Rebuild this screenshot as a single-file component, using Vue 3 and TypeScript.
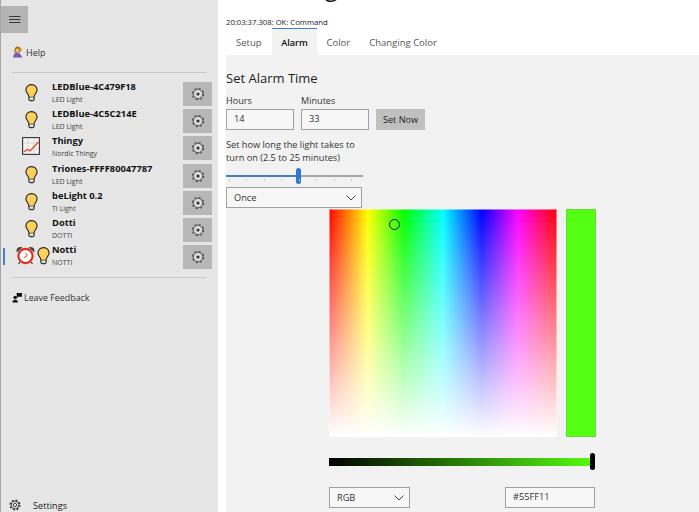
<template>
  <div class="app">
    <aside class="nav">
      <button class="burger" aria-label="Menu">
        <svg width="12" height="8" viewBox="0 0 12 8"><path d="M0 .5h11.5M0 3.5h11.5M0 6.5h11.5" stroke="#3a3a3a" stroke-width="1" fill="none" /></svg>
      </button>

      <div class="help">
        <svg width="11" height="12" viewBox="0 0 12 13">
          <path d="M1 12.5 2.5 8l3-1 3 1 3 4.500z" fill="#7a5bb5" />
          <path d="M2.500 7C2.500 2.500 4 .5 6 .5S9.800 2 10 4.500L8.500 7z" fill="#a8682c" />
          <circle cx="6" cy="4.600" r="2" fill="#f7c55a" />
          <path d="M9 4l2.500-1.500.5 1L9.500 6z" fill="#f0b64a" />
        </svg>
        <span>Help</span>
      </div>
      <div class="rule"></div>

      <div class="devices">
        <div v-for="d in devices" :key="d.name" class="device" :class="{ selected: d.selected }">
          <div class="device-icons">
            <svg v-if="d.alarm" class="alarm" width="19" height="19" viewBox="0 0 19 19">
              <path d="M.8 6.500C-.5 2 3 .2 6.500 1.500zM18.200 6.500C19.500 2 16 .2 12.500 1.500z" fill="#444" />
              <path d="M4 16l-1.500 2M15 16l1.500 2" stroke="#333" stroke-width="1.200" />
              <circle cx="9.500" cy="10" r="7.100" fill="#fff" stroke="#e62c18" stroke-width="2.100" />
              <path d="M9.500 7l1.800 3-3.500 1.600" stroke="#e8503c" stroke-width="1" fill="none" />
            </svg>
            <svg v-if="d.icon === 'bulb'" width="13" height="19" viewBox="0 0 14 19">
              <path d="M7 1C3.500 1 1 3.400 1 6.700 1 9.800 4 11.200 4.300 14.500v2.300c0 .9.700 1.400 1.500 1.400h2.400c.8 0 1.500-.5 1.500-1.400v-2.300C10 11.200 13 9.800 13 6.700 13 3.400 10.500 1 7 1z" fill="#fdd05c" stroke="#222" stroke-width="1.200" />
              <path d="M4.500 14.500h5v2.700c0 .5-.5.700-1 .7H5.500c-.5 0-1-.2-1-.7z" fill="#eee" stroke="#222" stroke-width=".7" />
            </svg>
            <svg v-else width="18" height="18" viewBox="0 0 18 18">
              <rect x=".6" y=".6" width="16.800" height="16.800" fill="#f6f4f2" stroke="#333" stroke-width="1.100" />
              <path d="M6 1v16M12 1v16M1 6h16M1 12h16" stroke="#c8c8c8" stroke-width=".6" />
              <path d="M1.500 15l4-2.500 2.500 1.500L16.500 5" stroke="#e8442c" stroke-width="1.300" fill="none" />
            </svg>
          </div>
          <div class="device-text">
            <div class="device-name">{{ d.name }}</div>
            <div class="device-kind">{{ d.kind }}</div>
          </div>
          <button class="device-gear" aria-label="Device settings">
            <svg width="14" height="14" viewBox="0 0 14 14">
              <circle cx="7" cy="7" r="5.600" fill="none" stroke="#444" stroke-width="1.100" stroke-dasharray="2.200 2.200" />
              <circle cx="7" cy="7" r="4.600" fill="#dcdcdc" stroke="#444" stroke-width=".8" />
              <circle cx="7" cy="7" r="1.600" fill="#333" />
            </svg>
          </button>
        </div>
      </div>
      <div class="rule rule-low"></div>

      <div class="feedback">
        <svg width="10" height="10" viewBox="0 0 11 11">
          <path d="M5 0h6v4H7L5.500 5.200z" fill="#111" />
          <circle cx="3.500" cy="5" r="2" fill="#111" />
          <path d="M.5 10.500c0-2 1-3 3-3s3 1 3 3z" fill="#111" />
        </svg>
        <span>Leave Feedback</span>
      </div>

      <div class="settings">
        <svg width="12" height="12" viewBox="0 0 12 12">
          <circle cx="6" cy="6" r="4.900" fill="none" stroke="#222" stroke-width="1.200" stroke-dasharray="1.920 1.930" />
          <circle cx="6" cy="6" r="3.900" fill="none" stroke="#222" stroke-width=".8" />
          <circle cx="6" cy="6" r="1.700" fill="none" stroke="#222" stroke-width=".8" />
        </svg>
        <span>Settings</span>
      </div>
    </aside>

    <main class="main">
      <div class="title"><span>Device Light</span></div>
      <div class="status">20:03:37.308: OK: Command</div>
      <div class="tabs">
        <div v-for="t in tabs" :key="t" class="tab" :class="{ active: t === 'Alarm' }">{{ t }}</div>
      </div>

      <section class="panel">
        <h2>Set Alarm Time</h2>
        <div class="time-row">
          <label class="field">
            <span>Hours</span>
            <div class="box">14</div>
          </label>
          <label class="field">
            <span>Minutes</span>
            <div class="box">33</div>
          </label>
          <button class="set-now">Set Now</button>
        </div>
        <p class="hint">Set how long the light takes to<br />turn on (2.5 to 25 minutes)</p>
        <div class="slider">
          <div class="track"></div>
          <div class="track-fill"></div>
          <div class="thumb"></div>
          <div class="ticks"><i v-for="n in 8" :key="n"></i></div>
        </div>
        <div class="select once">
          <span>Once</span>
          <svg width="10" height="6" viewBox="0 0 10 6"><path d="M.5.500 5 5 9.500.5" stroke="#444" fill="none" /></svg>
        </div>

        <div class="picker">
          <div class="spectrum">
            <div class="spectrum-white"></div>
            <div class="ring"></div>
          </div>
          <div class="preview"></div>
        </div>

        <div class="value">
          <div class="value-bar"></div>
          <div class="value-thumb"></div>
        </div>

        <div class="picker-foot">
          <div class="select rgb">
            <span>RGB</span>
            <svg width="10" height="6" viewBox="0 0 10 6"><path d="M.5.500 5 5 9.500.5" stroke="#444" fill="none" /></svg>
          </div>
          <div class="box hex">#55FF11</div>
        </div>
      </section>
    </main>
  </div>
</template>

<script setup lang="ts">
interface Device {
  name: string
  kind: string
  icon: 'bulb' | 'chart'
  alarm?: boolean
  selected?: boolean
}

const devices: Device[] = [
  { name: 'LEDBlue-4C479F18', kind: 'LED Light', icon: 'bulb' },
  { name: 'LEDBlue-4C5C214E', kind: 'LED Light', icon: 'bulb' },
  { name: 'Thingy', kind: 'Nordic Thingy', icon: 'chart' },
  { name: 'Triones-FFFF80047787', kind: 'LED Light', icon: 'bulb' },
  { name: 'beLight 0.2', kind: 'TI Light', icon: 'bulb' },
  { name: 'Dotti', kind: 'DOTTI', icon: 'bulb' },
  { name: 'Notti', kind: 'NOTTI', icon: 'bulb', alarm: true, selected: true }
]

const tabs = ['Setup', 'Alarm', 'Color', 'Changing Color']
</script>

<style>
html, body { margin: 0; background: #fff; overflow: hidden; }
</style>

<style scoped>
.app {
  display: flex;
  height: 512px;
  width: 699px;
  overflow: hidden;
  font-family: "Open Sans", "Noto Sans", sans-serif;
  font-size: 10px;
  color: #1c1c1c;
  background: #fff;
}

/* left pane */
.nav {
  width: 217px;
  flex: none;
  display: flex;
  flex-direction: column;
  background: #e6e6e6;
  border-left: 1px solid #a8a4a4;
  position: relative;
}
.burger {
  width: 27px;
  height: 27px;
  margin-top: 6px;
  padding: 0;
  border: 0;
  background: #b4b4b4;
  display: flex;
  align-items: center;
  justify-content: center;
}
.help {
  display: flex;
  align-items: center;
  gap: 3px;
  height: 16px;
  margin: 11px 0 0 11px;
  font-size: 9px;
  color: #333;
}
.rule {
  height: 1px;
  background: #c8c8c8;
  margin: 12px 11px 0 11px;
}
.rule-low { margin-top: 4.6px; }
.devices { margin-top: 9px; }
.device {
  display: flex;
  height: 27.2px;
  position: relative;
}
.device.selected::before {
  content: "";
  position: absolute;
  left: 2px;
  top: 3px;
  width: 2px;
  height: 17px;
  background: #4a7fd4;
}
.device-icons {
  width: 51px;
  flex: none;
  display: flex;
  justify-content: center;
  align-items: flex-start;
  gap: 2px;
  padding: 1px 0 0 9px;
  box-sizing: border-box;
}
.device-icons .alarm { margin-left: 4px; }
.device-text {
  flex: 1;
  min-width: 0;
  margin-top: -1px;
  white-space: nowrap;
}
.device-name {
  font-weight: 700;
  font-size: 9.3px;
  line-height: 11px;
  color: #111;
}
.device-kind {
  font-size: 7px;
  line-height: 9px;
  margin-top: 3px;
  color: #444;
}
.device-gear {
  width: 29px;
  height: 24px;
  padding: 0;
  margin-right: 6px;
  flex: none;
  border: 0;
  background: #b7b7b7;
  display: flex;
  align-items: center;
  justify-content: center;
}
.feedback {
  display: flex;
  align-items: center;
  gap: 2px;
  height: 14px;
  margin: 13px 0 0 11px;
  font-size: 8.9px;
  color: #333;
}
.settings {
  display: flex;
  align-items: center;
  gap: 12px;
  margin: auto 0 0 8px;
  height: 14px;
  font-size: 9.2px;
  color: #222;
}

/* right pane */
.main {
  flex: 1;
  min-width: 0;
  display: flex;
  flex-direction: column;
  padding-left: 8px;
}
.title {
  height: 16px;
  overflow: hidden;
  flex: none;
}
.title span {
  display: block;
  font-size: 24px;
  line-height: 32px;
  margin-top: -29px;
  color: #111;
}
.status {
  height: 12px;
  line-height: 12px;
  font-size: 7.7px;
  color: #222;
}
.tabs {
  display: flex;
  height: 27px;
  flex: none;
}
.tab {
  padding: 0 9.5px;
  line-height: 27px;
  font-size: 9.5px;
  color: #555;
  border-top: 1.5px solid transparent;
  box-sizing: border-box;
}
.tab:first-child { padding-left: 10px; min-width: 46px; }
.tab.active {
  width: 45px;
  padding: 0;
  text-align: center;
  background: #f2f2f2;
  color: #111;
  font-weight: 600;
  font-size: 9.2px;
  border-top: 1.5px solid #3f7fd8;
}
.panel {
  flex: 1;
  background: #f2f2f2;
  display: flex;
  flex-direction: column;
  align-items: flex-start;
  padding-top: 14px;
  min-height: 0;
}
h2 {
  margin: 0;
  font-size: 13px;
  font-weight: 400;
  line-height: 18px;
  color: #222;
}
.time-row {
  display: flex;
  align-items: flex-end;
  gap: 7px;
  margin-top: 8px;
}
.field {
  display: flex;
  flex-direction: column;
  gap: 2px;
  font-size: 9.1px;
  line-height: 12px;
  color: #333;
}
.box {
  box-sizing: border-box;
  background: #f7f7f7;
  border: 1.5px solid #a0a0a0;
  width: 68px;
  height: 21px;
  padding-left: 7px;
  line-height: 17px;
  font-size: 9.2px;
  color: #333;
}
.set-now {
  width: 49px;
  height: 21px;
  padding: 0;
  border: 0;
  background: #c0c0c0;
  font: inherit;
  font-size: 9.1px;
  color: #222;
}
.hint {
  margin: 8px 0 0;
  font-size: 9.2px;
  line-height: 13px;
  color: #333;
}
.slider {
  position: relative;
  width: 137px;
  height: 20px;
  margin-top: 3px;
}
.track {
  position: absolute;
  left: 0;
  right: 0;
  top: 8px;
  height: 2px;
  background: #a6a6a6;
}
.track-fill {
  position: absolute;
  left: 0;
  top: 8px;
  width: 72px;
  height: 2px;
  background: #3f7fd8;
}
.thumb {
  position: absolute;
  left: 70px;
  top: 1px;
  width: 5px;
  height: 16px;
  border-radius: 3px;
  background: #2f76d2;
}
.ticks {
  position: absolute;
  left: 3px;
  right: 11px;
  top: 12px;
  display: flex;
  justify-content: space-between;
}
.ticks i {
  width: 1px;
  height: 2px;
  background: #c8c8c8;
}
.select {
  box-sizing: border-box;
  display: flex;
  align-items: center;
  justify-content: space-between;
  border: 1.5px solid #a0a0a0;
  background: #f7f7f7;
  height: 21px;
  padding: 0 5px 0 7px;
  font-size: 9.2px;
  color: #333;
}
.once { width: 136px; }
.picker {
  display: flex;
  gap: 9px;
  margin: 1px 0 0 103px;
}
.spectrum {
  position: relative;
  width: 228px;
  height: 228px;
  box-sizing: border-box;
  border: 1px solid rgba(255, 255, 255, 0.45);
  background: linear-gradient(to right, #f00, #ff0 17%, #0f0 33%, #0ff 50%, #00f 67%, #f0f 83%, #f00) border-box;
}
.spectrum-white {
  position: absolute;
  inset: -1px;
  background: linear-gradient(to bottom, rgba(255, 255, 255, 0), #fff);
}
.ring {
  position: absolute;
  left: 59px;
  top: 9px;
  width: 11px;
  height: 11px;
  box-sizing: border-box;
  border: 1.7px solid #111;
  border-radius: 50%;
}
.preview {
  width: 30px;
  height: 228px;
  box-sizing: border-box;
  background: #55ff11;
  border: 1px solid #62dc36;
}
.value {
  position: relative;
  margin: 16px 0 0 103px;
  width: 268px;
  height: 17px;
}
.value-bar {
  position: absolute;
  left: 0;
  right: 2px;
  top: 5px;
  height: 8px;
  background: linear-gradient(to right, #000, #55ff11);
}
.value-thumb {
  position: absolute;
  right: 2px;
  top: 0;
  width: 5px;
  height: 17px;
  border-radius: 3px;
  background: #000;
}
.picker-foot {
  display: flex;
  justify-content: space-between;
  width: 266px;
  margin: 17px 0 0 103px;
}
.rgb { width: 81px; }
.hex { width: 90px; }
</style>
